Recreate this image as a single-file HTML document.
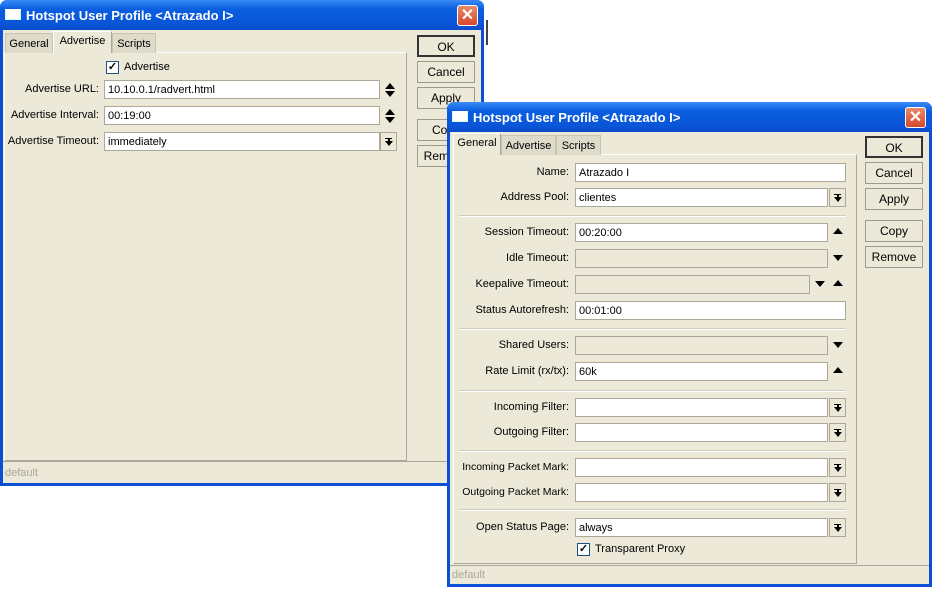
<!DOCTYPE html>
<html><head><meta charset="utf-8"><style>
*{margin:0;padding:0;box-sizing:border-box}
body{width:942px;height:593px;background:#fff;position:relative;overflow:hidden;font-family:"Liberation Sans",sans-serif;font-size:11px;color:#000}
.a{position:absolute}
.win{position:absolute;background:#0a4fd6;border-radius:7px 7px 0 0;}
.tb{position:absolute;left:0;right:0;top:0;height:30px;border-radius:7px 7px 0 0;background:linear-gradient(#3a8cf6,#0a5ee0 30%,#0a55d8 80%,#0a4bc8)}
.ttl{position:absolute;left:26px;top:8px;color:#fff;font-weight:bold;font-size:13px;white-space:nowrap}
.ico{position:absolute;left:5px;top:9px;width:16px;height:11px;background:#fff;border:1px solid #cfe;border-top:3px solid #fff}
.x{position:absolute;top:5px;width:21px;height:21px;border:1px solid #fff;border-radius:3px;background:linear-gradient(#e88a6c,#d6482a);color:#fff;font-weight:bold;font-size:16px;line-height:19px;text-align:center}
.body{position:absolute;left:3px;right:3px;top:30px;bottom:3px;background:#ece9d8}
.tab{position:absolute;height:20px;border:1px solid #c8c4b0;border-bottom:none;background:#dedbcb;color:#000;padding-top:4px;text-align:center;font-size:11px}
.tab.on{background:#ece9d8;height:22px;border-color:#fff #aca899 #fff #fff;padding-top:3px}
.panel{position:absolute;border:1px solid #aca899;border-left-color:#fff;border-top-color:#fff}
.btn{position:absolute;width:58px;height:22px;border:1px solid #9c9a8c;background:#ece9d8;text-align:center;line-height:20px;font-size:12px}
.btn.ok{border:2px solid #333}
.in{position:absolute;height:19px;background:#fff;border:1px solid #aca899;padding-left:3px;line-height:19px;font-size:11px;white-space:nowrap}
.in.dis{background:#ece9d8}
.lb{position:absolute;text-align:right;font-size:11px;white-space:nowrap}
.dd{position:absolute;width:17px;height:19px;border:1px solid #aca899;background:#ece9d8}
.dd:after{content:"";position:absolute;left:4px;top:5px;width:7px;height:1px;background:#000}
.dd i{position:absolute;left:4px;top:8px;border-left:4px solid transparent;border-right:4px solid transparent;border-top:5px solid #000;width:0}
.dd b{position:absolute;left:7px;top:6px;width:2px;height:3px;background:#000}
.up{position:absolute;width:0;border-left:5px solid transparent;border-right:5px solid transparent;border-bottom:6px solid #000}
.dn{position:absolute;width:0;border-left:5px solid transparent;border-right:5px solid transparent;border-top:6px solid #000}
.sep{position:absolute;height:2px;border-top:1px solid #d0cdbd;border-bottom:1px solid #fff}
.cb{position:absolute;width:13px;height:13px;border:1px solid #1c5180;background:#fff;font-size:11px;line-height:11px;text-align:center;font-weight:bold}
.st{position:absolute;color:#aca899;font-size:11px}
</style></head><body>

<div class="a" style="left:486px;top:20px;width:2px;height:25px;background:#444"></div>

<!-- Window 1 -->
<div class="win" style="left:0;top:0;width:484px;height:486px">
 <div class="tb"></div>
 <div class="ico"></div>
 <div class="ttl">Hotspot User Profile &lt;Atrazado I&gt;</div>
 <div class="x" style="left:457px">✕</div>
 <div class="body">
  <div class="panel" style="left:1px;top:22px;width:403px;height:409px"></div>
  <div class="tab" style="left:2px;top:3px;width:48px">General</div>
  <div class="tab on" style="left:50px;top:1px;width:59px">Advertise</div>
  <div class="tab" style="left:109px;top:3px;width:44px">Scripts</div>
  <div class="cb" style="left:103px;top:31px">✓</div>
  <div class="a" style="left:121px;top:31px">Advertise</div>
  <div class="lb" style="left:0;width:96px;top:53px">Advertise URL:</div>
  <div class="in" style="left:101px;top:50px;width:276px">10.10.0.1/radvert.html</div>
  <div class="up" style="left:382px;top:53px"></div><div class="dn" style="left:382px;top:61px"></div>
  <div class="lb" style="left:0;width:96px;top:79px">Advertise Interval:</div>
  <div class="in" style="left:101px;top:76px;width:276px">00:19:00</div>
  <div class="up" style="left:382px;top:79px"></div><div class="dn" style="left:382px;top:87px"></div>
  <div class="lb" style="left:0;width:96px;top:105px">Advertise Timeout:</div>
  <div class="in" style="left:101px;top:102px;width:276px">immediately</div>
  <div class="dd" style="left:377px;top:102px"><b></b><i></i></div>
  <div class="a" style="left:0;right:0;top:431px;height:1px;background:#aca899"></div>
  <div class="st" style="left:2px;top:437px">default</div>
  <div class="btn ok" style="left:414px;top:5px">OK</div>
  <div class="btn" style="left:414px;top:31px">Cancel</div>
  <div class="btn" style="left:414px;top:57px">Apply</div>
  <div class="btn" style="left:414px;top:89px">Copy</div>
  <div class="btn" style="left:414px;top:115px">Remove</div>
 </div>
</div>

<!-- Window 2 -->
<div class="win" style="left:447px;top:102px;width:485px;height:485px">
 <div class="tb"></div>
 <div class="ico"></div>
 <div class="ttl">Hotspot User Profile &lt;Atrazado I&gt;</div>
 <div class="x" style="left:458px">✕</div>
 <div class="body" style="font-size:11px">
  <div class="panel" style="left:3px;top:22px;width:404px;height:410px"></div>
  <div class="tab on" style="left:3px;top:1px;width:48px">General</div>
  <div class="tab" style="left:51px;top:3px;width:55px">Advertise</div>
  <div class="tab" style="left:106px;top:3px;width:45px">Scripts</div>

  <div class="lb" style="left:0;width:119px;top:34px">Name:</div>
  <div class="in" style="left:125px;top:31px;width:271px">Atrazado I</div>
  <div class="lb" style="left:0;width:119px;top:59px">Address Pool:</div>
  <div class="in" style="left:125px;top:56px;width:253px">clientes</div>
  <div class="dd" style="left:379px;top:56px"><b></b><i></i></div>
  <div class="sep" style="left:9px;width:387px;top:83px"></div>

  <div class="lb" style="left:0;width:119px;top:94px">Session Timeout:</div>
  <div class="in" style="left:125px;top:91px;width:253px">00:20:00</div>
  <div class="up" style="left:383px;top:96px"></div>
  <div class="lb" style="left:0;width:119px;top:120px">Idle Timeout:</div>
  <div class="in dis" style="left:125px;top:117px;width:253px"></div>
  <div class="dn" style="left:383px;top:123px"></div>
  <div class="lb" style="left:0;width:119px;top:146px">Keepalive Timeout:</div>
  <div class="in dis" style="left:125px;top:143px;width:235px"></div>
  <div class="dn" style="left:365px;top:149px"></div><div class="up" style="left:383px;top:148px"></div>
  <div class="lb" style="left:0;width:119px;top:172px">Status Autorefresh:</div>
  <div class="in" style="left:125px;top:169px;width:271px">00:01:00</div>
  <div class="sep" style="left:9px;width:387px;top:196px"></div>

  <div class="lb" style="left:0;width:119px;top:207px">Shared Users:</div>
  <div class="in dis" style="left:125px;top:204px;width:253px"></div>
  <div class="dn" style="left:383px;top:210px"></div>
  <div class="lb" style="left:0;width:119px;top:233px">Rate Limit (rx/tx):</div>
  <div class="in" style="left:125px;top:230px;width:253px">60k</div>
  <div class="up" style="left:383px;top:235px"></div>
  <div class="sep" style="left:9px;width:387px;top:258px"></div>

  <div class="lb" style="left:0;width:119px;top:269px">Incoming Filter:</div>
  <div class="in" style="left:125px;top:266px;width:253px"></div>
  <div class="dd" style="left:379px;top:266px"><b></b><i></i></div>
  <div class="lb" style="left:0;width:119px;top:294px">Outgoing Filter:</div>
  <div class="in" style="left:125px;top:291px;width:253px"></div>
  <div class="dd" style="left:379px;top:291px"><b></b><i></i></div>
  <div class="sep" style="left:9px;width:387px;top:318px"></div>

  <div class="lb" style="left:0;width:119px;top:329px;font-size:10.5px">Incoming Packet Mark:</div>
  <div class="in" style="left:125px;top:326px;width:253px"></div>
  <div class="dd" style="left:379px;top:326px"><b></b><i></i></div>
  <div class="lb" style="left:0;width:119px;top:354px;font-size:10.5px">Outgoing Packet Mark:</div>
  <div class="in" style="left:125px;top:351px;width:253px"></div>
  <div class="dd" style="left:379px;top:351px"><b></b><i></i></div>
  <div class="sep" style="left:9px;width:387px;top:377px"></div>

  <div class="lb" style="left:0;width:119px;top:389px">Open Status Page:</div>
  <div class="in" style="left:125px;top:386px;width:253px">always</div>
  <div class="dd" style="left:379px;top:386px"><b></b><i></i></div>
  <div class="cb" style="left:127px;top:411px">✓</div>
  <div class="a" style="left:145px;top:411px">Transparent Proxy</div>

  <div class="a" style="left:0;right:0;top:433px;height:1px;background:#aca899"></div>
  <div class="st" style="left:2px;top:437px">default</div>

  <div class="btn ok" style="left:415px;top:4px">OK</div>
  <div class="btn" style="left:415px;top:30px">Cancel</div>
  <div class="btn" style="left:415px;top:56px">Apply</div>
  <div class="btn" style="left:415px;top:88px">Copy</div>
  <div class="btn" style="left:415px;top:114px">Remove</div>
 </div>
</div>
</body></html>
